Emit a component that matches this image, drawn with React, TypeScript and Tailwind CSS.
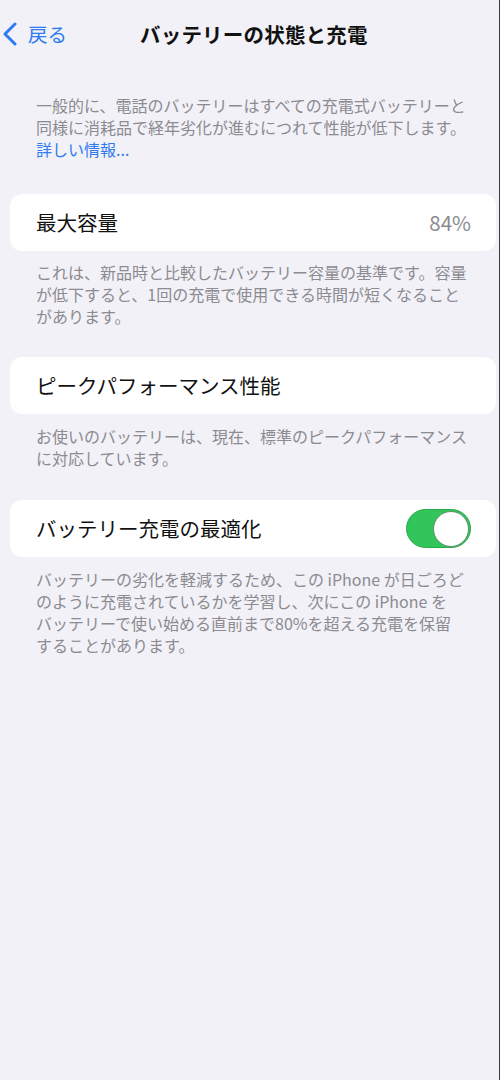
import React from "react";

const FONT = { fontFamily: '"Noto Sans CJK JP", "Noto Sans", "Liberation Sans", sans-serif' };

function Card({ title, right }: { title: string; right?: React.ReactNode }) {
  return (
    <div className="ml-[10px] mr-[3px] h-[57px] rounded-[12px] bg-white flex items-center justify-between pl-[26px] pr-[25px]">
      <span className="text-[20.5px] text-[#111] leading-none">{title}</span>
      {right}
    </div>
  );
}

function Caption({ children }: { children: React.ReactNode }) {
  return <p className="pl-[36px] pr-[20px] text-[16px] leading-[22px] text-[#8b8b90] whitespace-nowrap">{children}</p>;
}

function Toggle() {
  return (
    <div className="w-[65px] h-[39px] rounded-full bg-[#32c55a] border border-[#2aa94c] flex items-center justify-end pr-[1px]">
      <div className="w-[36px] h-[36px] rounded-full bg-white border-[1.5px] border-[#5f8f69]" />
    </div>
  );
}

export default function App() {
  return (
    <div style={FONT} className="w-[500px] h-[1080px] bg-[#f2f1f7] border-r border-[#3a3a3a]">
      {/* nav bar */}
      <div className="relative h-[68px] flex items-center">
        <div className="flex items-center pl-[2px] text-[#2f7bf2]">
          <svg width="16" height="24" viewBox="0 0 16 24" fill="none">
            <path d="M13 2 L3 12 L13 22" stroke="currentColor" strokeWidth="3" strokeLinecap="round" strokeLinejoin="round" />
          </svg>
          <span className="ml-[10px] text-[19.5px] leading-none">戻る</span>
        </div>
        <div className="absolute left-[140px] text-[20.5px] font-bold text-[#111] leading-none tracking-[0.2px]">
          バッテリーの状態と充電
        </div>
      </div>

      <div className="mt-[26px]">
        <Caption>
          一般的に、電話のバッテリーはすべての充電式バッテリーと
          <br />
          同様に消耗品で経年劣化が進むにつれて性能が低下します。
          <br />
          <span className="text-[#2f7bf2]">詳しい情報...</span>
        </Caption>
      </div>

      <div className="mt-[34px]">
        <Card title="最大容量" right={<span className="text-[20.5px] text-[#8b8b90] leading-none">84%</span>} />
      </div>
      <div className="mt-[10px]">
        <Caption>
          これは、新品時と比較したバッテリー容量の基準です。容量
          <br />
          が低下すると、1回の充電で使用できる時間が短くなること
          <br />
          があります。
        </Caption>
      </div>

      <div className="mt-[30px]">
        <Card title="ピークパフォーマンス性能" />
      </div>
      <div className="mt-[11px]">
        <Caption>
          お使いのバッテリーは、現在、標準のピークパフォーマンス
          <br />
          に対応しています。
        </Caption>
      </div>

      <div className="mt-[31px]">
        <Card title="バッテリー充電の最適化" right={<Toggle />} />
      </div>
      <div className="mt-[11px]">
        <Caption>
          バッテリーの劣化を軽減するため、この iPhone が日ごろど
          <br />
          のように充電されているかを学習し、次にこの iPhone を
          <br />
          バッテリーで使い始める直前まで80%を超える充電を保留
          <br />
          することがあります。
        </Caption>
      </div>
    </div>
  );
}
